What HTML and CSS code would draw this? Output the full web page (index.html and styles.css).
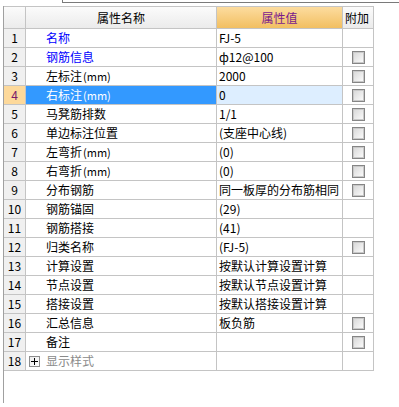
FILE: index.html
```html
<!DOCTYPE html>
<html lang="zh">
<head>
<meta charset="utf-8">
<link rel="stylesheet" href="styles.css">
</head>
<body>
<div class="topbar"></div>
<div class="panel">
  <div class="grid">
    <div class="c hd num"></div>
    <div class="c hd name-h">属性名称</div>
    <div class="c hd val-h">属性值</div>
    <div class="c hd add-h">附加</div>

    <div class="c num">1</div><div class="c name blue">名称</div><div class="c val">FJ-5</div><div class="c add"></div>
    <div class="c num">2</div><div class="c name blue">钢筋信息</div><div class="c val">ф12@100</div><div class="c add"><span class="cb"></span></div>
    <div class="c num">3</div><div class="c name">左标注<span class="mm">(mm)</span></div><div class="c val">2000</div><div class="c add"><span class="cb"></span></div>
    <div class="c num sel-num">4</div><div class="c name sel-name">右标注<span class="mm">(mm)</span></div><div class="c val sel-val">0</div><div class="c add"><span class="cb"></span></div>
    <div class="c num">5</div><div class="c name">马凳筋排数</div><div class="c val">1/1</div><div class="c add"><span class="cb"></span></div>
    <div class="c num">6</div><div class="c name">单边标注位置</div><div class="c val">(支座中心线)</div><div class="c add"><span class="cb"></span></div>
    <div class="c num">7</div><div class="c name">左弯折<span class="mm">(mm)</span></div><div class="c val">(0)</div><div class="c add"><span class="cb"></span></div>
    <div class="c num">8</div><div class="c name">右弯折<span class="mm">(mm)</span></div><div class="c val">(0)</div><div class="c add"><span class="cb"></span></div>
    <div class="c num">9</div><div class="c name">分布钢筋</div><div class="c val">同一板厚的分布筋相同</div><div class="c add"><span class="cb"></span></div>
    <div class="c num">10</div><div class="c name">钢筋锚固</div><div class="c val">(29)</div><div class="c add"></div>
    <div class="c num">11</div><div class="c name">钢筋搭接</div><div class="c val">(41)</div><div class="c add"></div>
    <div class="c num">12</div><div class="c name">归类名称</div><div class="c val">(FJ-5)</div><div class="c add"><span class="cb"></span></div>
    <div class="c num">13</div><div class="c name">计算设置</div><div class="c val">按默认计算设置计算</div><div class="c add"></div>
    <div class="c num">14</div><div class="c name">节点设置</div><div class="c val">按默认节点设置计算</div><div class="c add"></div>
    <div class="c num">15</div><div class="c name">搭接设置</div><div class="c val">按默认搭接设置计算</div><div class="c add"></div>
    <div class="c num">16</div><div class="c name">汇总信息</div><div class="c val">板负筋</div><div class="c add"><span class="cb"></span></div>
    <div class="c num">17</div><div class="c name">备注</div><div class="c val"></div><div class="c add"><span class="cb"></span></div>
    <div class="c num">18</div><div class="c name group"><span class="plus"></span>显示样式</div><div class="c val"></div><div class="c add"></div>
  </div>
</div>
</body>
</html>
```
FILE: styles.css
```css
html, body {
  margin: 0;
  padding: 0;
  background: #ffffff;
}
body {
  width: 399px;
  height: 407px;
  overflow: hidden;
  font-family: "Noto Sans CJK SC", "Noto Sans", sans-serif;
  font-size: 12px;
  color: #000;
}
.topbar {
  margin-left: 62px;
  height: 2px;
  border-left: 1px solid #7a7a7a;
  border-bottom: 1px solid #7a7a7a;
}
.panel {
  margin-top: 3px;
  margin-left: 3px;
  height: 397px;
  border-left: 1px solid #a0a0a0;
}
.grid {
  display: grid;
  grid-template-columns: 21px 190px 125px 30px;
  grid-template-rows: 21px repeat(18, 18px);
  gap: 1px;
  width: 369px;
  background: #c4c4c4;
  border-top: 1px solid #c4c4c4;
  border-right: 1px solid #c4c4c4;
  border-bottom: 1px solid #c4c4c4;
}
.c {
  background: #fff;
  display: flex;
  align-items: center;
  white-space: nowrap;
  overflow: hidden;
  line-height: 1;
}
.hd {
  background: linear-gradient(#fbfbfb, #ebebeb);
  justify-content: center;
  font-size: 12px;
}
.val-h {
  background: linear-gradient(#fcdc9f, #f2bf61);
  color: #7a1a8c;
}
.add-h {
  justify-content: flex-start;
  padding-left: 2px;
}
.num {
  background: #f0f0f0;
  justify-content: center;
}
.hd.num {
  background: linear-gradient(#fbfbfb, #ebebeb);
}
.name {
  padding-left: 20px;
}
.blue {
  color: #0000ff;
}
.val {
  padding-left: 2px;
}
.add {
  justify-content: center;
  padding-left: 1px;
}
.mm {
  font-size: 11px;
  margin-left: 1px;
}
.sel-num {
  background: #fdd99b;
  color: #7a1a6a;
}
.sel-name {
  background: #3399ff;
  color: #fff;
}
.sel-val {
  background: #ddeeff;
}
.cb {
  width: 11px;
  height: 11px;
  border: 1px solid #858585;
  box-shadow: inset 0 0 0 1px #c9c9c9;
  background: linear-gradient(135deg, #d6d6d6, #fdfdfd);
}
.group {
  padding-left: 3px;
  color: #8a8a8a;
}
.plus {
  position: relative;
  width: 9px;
  height: 9px;
  margin-right: 6px;
  border: 1px solid #8d8d8d;
  background: linear-gradient(135deg, #ececec, #fff);
  flex: none;
}
.plus::before,
.plus::after {
  content: "";
  position: absolute;
  background: #000;
}
.plus::before {
  left: 1px;
  right: 1px;
  top: 4px;
  height: 1px;
}
.plus::after {
  top: 1px;
  bottom: 1px;
  left: 4px;
  width: 1px;
}
```
